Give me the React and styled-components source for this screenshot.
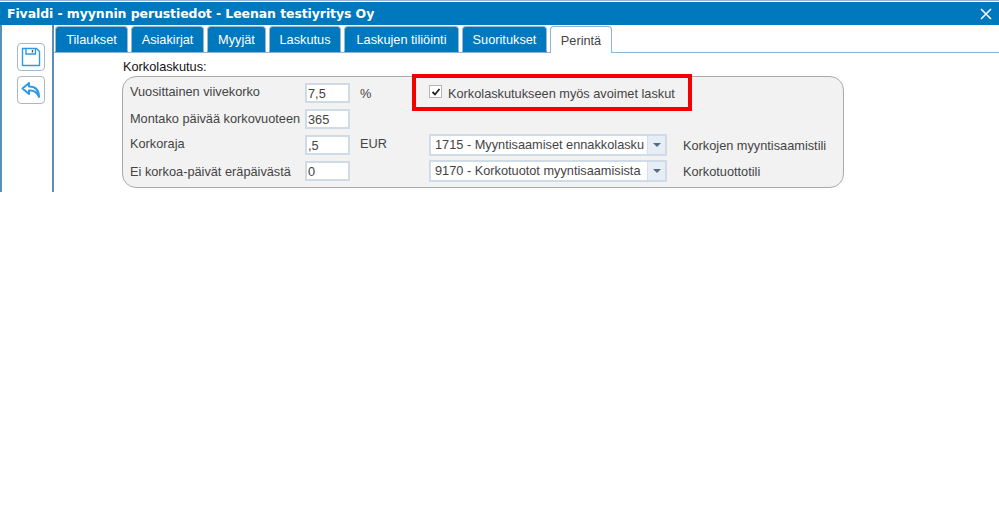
import React from "react";
import styled, { createGlobalStyle } from "styled-components";

const GlobalStyle = createGlobalStyle`
  html, body {
    margin: 0;
    padding: 0;
    background: #fff;
  }
  body {
    font-family: "Liberation Sans", Arial, sans-serif;
    font-size: 12.75px;
    color: #444;
  }
`;

const Dialog = styled.div`
  width: 999px;
  height: 192px;
  display: flex;
  flex-direction: column;
  border-top: 1px solid #8fb3d0;
  box-sizing: border-box;
`;

const TitleBar = styled.div`
  height: 23px;
  margin-top: 1px;
  flex: none;
  background: #0078bd;
  color: #fff;
  font-family: "DejaVu Sans", Verdana, sans-serif;
  font-weight: bold;
  font-size: 12.5px;
  letter-spacing: -0.1px;
  display: flex;
  align-items: center;
  justify-content: space-between;
  padding: 0 7px 0 7px;
`;

const CloseIcon = styled.svg`
  width: 12px;
  height: 12px;
  display: block;
`;

const Body = styled.div`
  flex: 1;
  display: flex;
  min-height: 0;
`;

const Sidebar = styled.div`
  width: 43px;
  flex: none;
  border-left: 2px solid #5a8fb8;
  border-right: 2px solid #5a8fb8;
  display: flex;
  flex-direction: column;
  align-items: center;
  gap: 5px;
  padding: 18px 0 0 7px;
`;

const IconButton = styled.button`
  width: 28px;
  height: 28px;
  padding: 0;
  background: #fff;
  border: 1px solid #a9b8c4;
  border-radius: 4px;
  display: flex;
  align-items: center;
  justify-content: center;
`;

const Main = styled.div`
  flex: 1;
  min-width: 0;
`;

const TabStrip = styled.div`
  height: 28px;
  box-sizing: border-box;
  display: flex;
  align-items: flex-end;
  gap: 3px;
  padding-left: 1px;
  border-bottom: 1px solid #8fb3d0;
`;

const Tab = styled.div`
  width: ${(p) => p.$width}px;
  height: ${(p) => (p.$active ? 27 : 26)}px;
  box-sizing: border-box;
  margin-bottom: ${(p) => (p.$active ? -1 : 0)}px;
  display: flex;
  align-items: center;
  justify-content: center;
  font-size: 12.75px;
  border: 1px solid ${(p) => (p.$active ? "#8fb3d0" : "#9fb9cc")};
  border-bottom: ${(p) => (p.$active ? "none" : "1px solid #0078bd")};
  border-radius: 4px 4px 0 0;
  background: ${(p) => (p.$active ? "#fff" : "#0078bd")};
  color: ${(p) => (p.$active ? "#444" : "#fff")};
`;

const Section = styled.div`
  padding: 7px 0 0 68px;
`;

const SectionTitle = styled.div`
  color: #111;
  line-height: 14px;
  margin-bottom: 2px;
  padding-left: 1px;
`;

const Panel = styled.div`
  position: relative;
  width: 722px;
  height: 112px;
  box-sizing: border-box;
  background: #f2f2f2;
  border: 1px solid #aaa;
  border-radius: 14px;
  padding: 3px 0 0 7px;
  display: grid;
  grid-template-columns: 175px 45px 79px 254px auto;
  grid-auto-rows: 26px;
  align-items: center;
`;

const Label = styled.div`
  white-space: nowrap;
  padding-bottom: ${(p) => p.$lift || 0}px;
`;

const Unit = styled.div`
  padding-left: 10px;
  padding-bottom: ${(p) => p.$lift || 0}px;
`;

const TextInput = styled.input`
  width: 45px;
  height: 20px;
  box-sizing: border-box;
  border: 2px solid #cfdce8;
  padding: 0 1px;
  background: #fff;
  font: 12.75px "Liberation Sans", Arial, sans-serif;
  color: #444;
`;

const CheckRow = styled.label`
  grid-column: 4 / 6;
  display: flex;
  align-items: center;
  gap: 6px;
`;

const CheckBox = styled.span`
  width: 13px;
  height: 13px;
  box-sizing: border-box;
  border: 1px solid #b5b5b5;
  background: #fff;
  display: flex;
  align-items: center;
  justify-content: center;
  margin-bottom: 3px;
`;

const Highlight = styled.div`
  position: absolute;
  left: 289px;
  top: -3px;
  width: 280px;
  height: 37px;
  box-sizing: border-box;
  border: 4px solid #f40000;
  pointer-events: none;
`;

const Select = styled.div`
  width: 238px;
  height: 22px;
  box-sizing: border-box;
  display: flex;
  border: 2px solid #cfdce8;
  background: #fff;
`;

const SelectValue = styled.div`
  flex: 1;
  padding-left: 4px;
  line-height: 17px;
  white-space: nowrap;
  overflow: hidden;
`;

const SelectArrow = styled.div`
  width: 17px;
  background: #e6edf4;
  border-left: 1px solid #d3dfea;
  display: flex;
  align-items: center;
  justify-content: center;

  &::after {
    content: "";
    border-left: 4px solid transparent;
    border-right: 4px solid transparent;
    border-top: 4px solid #4f6d8a;
  }
`;

const tabs = [
  ["Tilaukset", 73],
  ["Asiakirjat", 73],
  ["Myyjät", 59],
  ["Laskutus", 72],
  ["Laskujen tiliöinti", 115],
  ["Suoritukset", 85],
  ["Perintä", 62],
];

const App = () => (
  <>
    <GlobalStyle />
    <Dialog>
      <TitleBar>
        <span>Fivaldi - myynnin perustiedot - Leenan testiyritys Oy</span>
        <CloseIcon viewBox="0 0 12 12">
          <path d="M1 1 L11 11 M11 1 L1 11" stroke="#fff" strokeWidth="1.5" fill="none" />
        </CloseIcon>
      </TitleBar>
      <Body>
        <Sidebar>
          <IconButton aria-label="Tallenna">
            <svg width="20" height="20" viewBox="0 0 20 20" fill="none" stroke="#2f9be0" strokeWidth="1.4">
              <path d="M1.5 1.5 H15.5 L18.5 4.5 V18.5 H1.5 Z" strokeLinejoin="round" />
              <path d="M5 1.5 V7 H14.5 V1.5" />
              <path d="M11.5 3 V5.5" stroke="#555" />
            </svg>
          </IconButton>
          <IconButton aria-label="Takaisin">
            <svg width="20" height="20" viewBox="0 0 20 20" fill="none" stroke="#2f9be0" strokeWidth="2" strokeLinejoin="round" strokeLinecap="round">
              <path d="M8 3 L1.5 8.5 L8 14 V10.5 C12.5 10 16 12 18 17 C18 10 14 6.5 8 6.5 Z" />
            </svg>
          </IconButton>
        </Sidebar>
        <Main>
          <TabStrip>
            {tabs.map(([name, width]) => (
              <Tab key={name} $width={width} $active={name === "Perintä"}>
                {name}
              </Tab>
            ))}
          </TabStrip>
          <Section>
            <SectionTitle>Korkolaskutus:</SectionTitle>
            <Panel>
              <Label $lift={3}>Vuosittainen viivekorko</Label>
              <TextInput defaultValue="7,5" />
              <Unit>%</Unit>
              <CheckRow>
                <CheckBox>
                  <svg width="10" height="10" viewBox="0 0 10 10" fill="none" stroke="#222" strokeWidth="1.8">
                    <path d="M1.5 5 L4 7.5 L8.5 2" />
                  </svg>
                </CheckBox>
                Korkolaskutukseen myös avoimet laskut
              </CheckRow>

              <Label $lift={2}>Montako päivää korkovuoteen</Label>
              <TextInput defaultValue="365" />
              <span />
              <span />
              <span />

              <Label $lift={3}>Korkoraja</Label>
              <TextInput defaultValue=",5" />
              <Unit $lift={4}>EUR</Unit>
              <Select>
                <SelectValue>1715 - Myyntisaamiset ennakkolasku</SelectValue>
                <SelectArrow />
              </Select>
              <Label>Korkojen myyntisaamistili</Label>

              <Label>Ei korkoa-päivät eräpäivästä</Label>
              <TextInput defaultValue="0" />
              <span />
              <Select>
                <SelectValue>9170 - Korkotuotot myyntisaamisista</SelectValue>
                <SelectArrow />
              </Select>
              <Label>Korkotuottotili</Label>

              <Highlight />
            </Panel>
          </Section>
        </Main>
      </Body>
    </Dialog>
  </>
);

export default App;
